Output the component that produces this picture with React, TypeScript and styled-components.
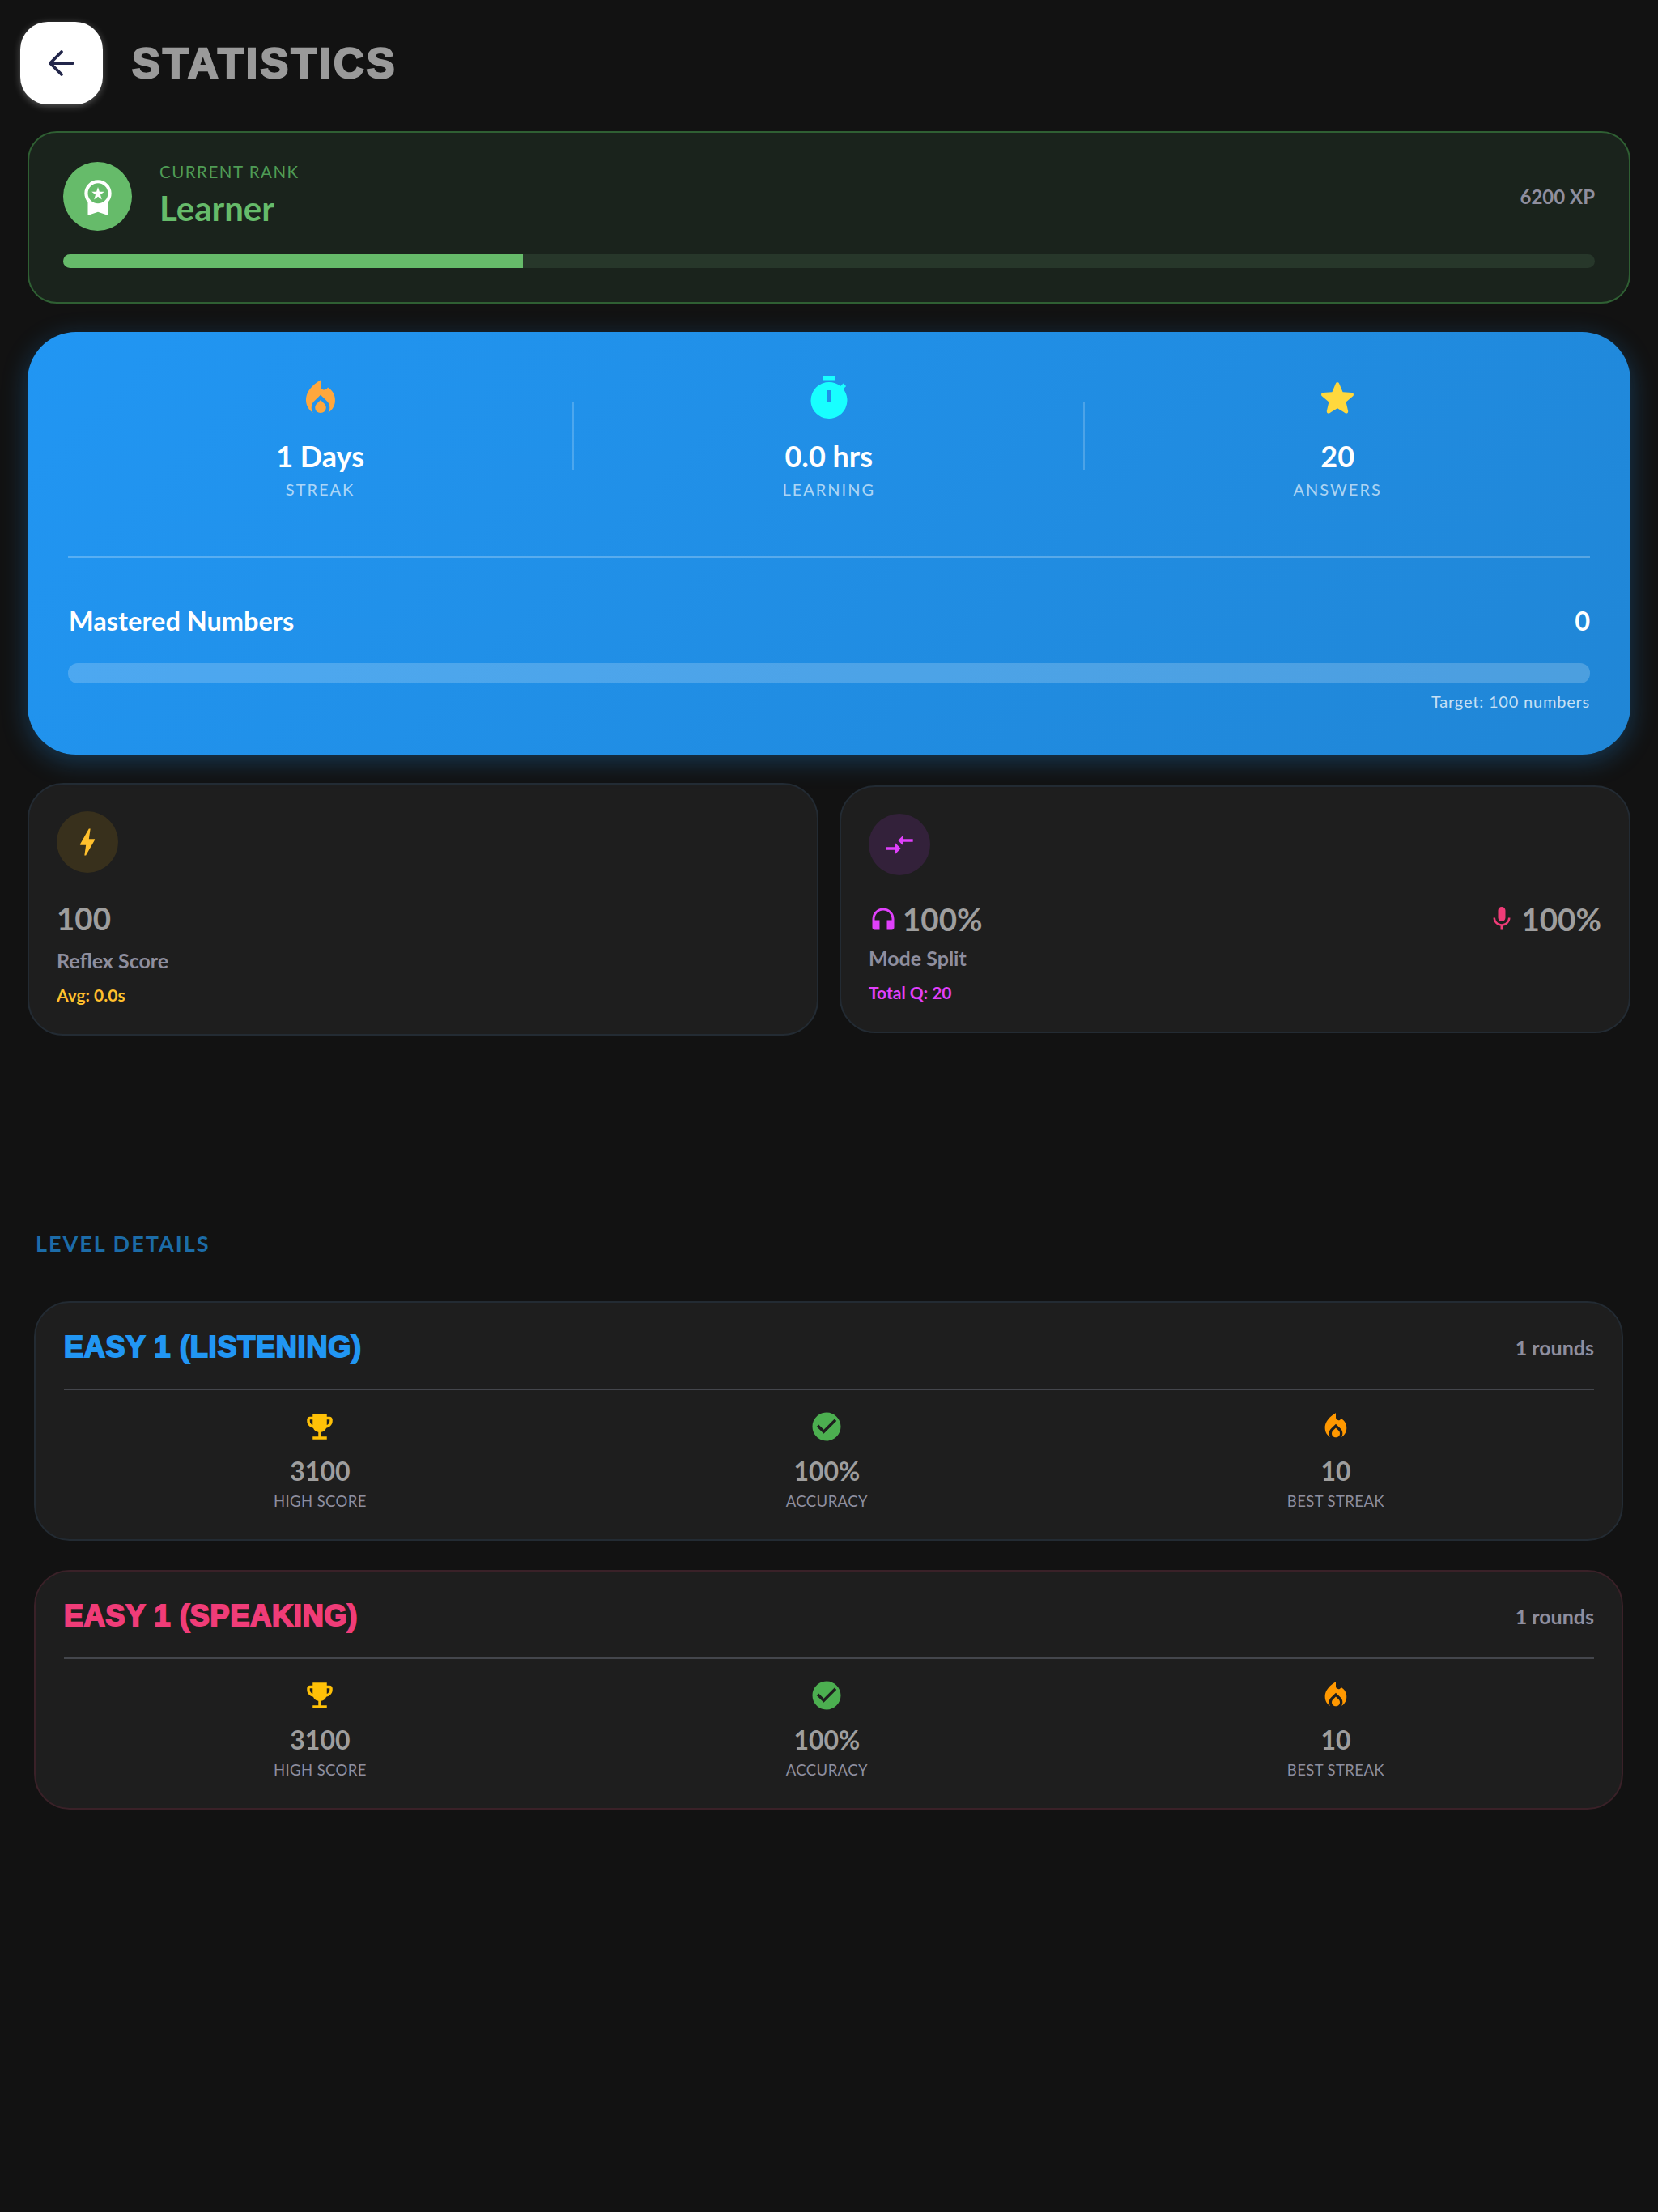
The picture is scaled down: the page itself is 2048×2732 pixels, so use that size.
import React from "react";
import styled, { createGlobalStyle } from "styled-components";
import { ArrowLeft } from "lucide-react";
import {
  MdLocalFireDepartment, MdTimer, MdEmojiEvents, MdCheckCircle,
  MdBolt, MdCompareArrows, MdHeadphones, MdMic, MdWorkspacePremium,
} from "react-icons/md";

const Global = createGlobalStyle`
  html, body { margin: 0; padding: 0; background: #121212; }
  body { font-family: "Lato", "Noto Sans", sans-serif; color: #9e9e9e; }
  * { box-sizing: border-box; }
`;
const Page = styled.div`
  width: 2048px; height: 2732px; background: #121212; overflow: hidden;
  display: flex; flex-direction: column;
`;
const Header = styled.header`
  display: flex; align-items: center; gap: 36px; padding: 27px 25px 0; height: 128px;
`;
const BackButton = styled.button`
  width: 102px; height: 102px; border: 0; border-radius: 34px; background: #fff;
  display: flex; align-items: center; justify-content: center; color: #22264a;
  box-shadow: 0 2px 10px rgba(255,255,255,.3); padding: 0;
`;
const Title = styled.h1`
  margin: 0; font: 700 52px "Liberation Sans", sans-serif; letter-spacing: 3.2px; color: #9a9a9a;
  -webkit-text-stroke: 2.5px #9a9a9a; line-height: 1;
`;
const Column = styled.div`
  display: flex; flex-direction: column; padding: 34px 34px 0; gap: 35px;
`;
const RankCard = styled.section`
  height: 213px; border: 2px solid #2f5f33; border-radius: 36px; background: #1a231c;
  padding: 36px 42px 0; display: flex; flex-direction: column; gap: 29px;
`;
const RankRow = styled.div`
  display: flex; align-items: center; gap: 34px; height: 85px;
`;
const RankIcon = styled.div`
  width: 85px; height: 85px; border-radius: 50%; background: #66bb6a; color: #fff;
  display: flex; align-items: center; justify-content: center;
`;
const RankText = styled.div` flex: 1; display: flex; flex-direction: column; gap: 9px; margin-top: -5px; `;
const RankLabel = styled.div`
  font-size: 20.5px; font-weight: 400; letter-spacing: 1.5px; color: #4f9c55; line-height: 24px;
`;
const RankName = styled.div` font-size: 42px; font-weight: 700; color: #66bb6a; line-height: 48px; `;
const Xp = styled.div` font-size: 24px; font-weight: 700; color: #8e8e9e; `;
const Track = styled.div<{ $h: number; $bg: string; $r: number }>`
  height: ${p => p.$h}px; background: ${p => p.$bg}; border-radius: ${p => p.$r}px; overflow: hidden;
`;
const Fill = styled.div<{ $c: string }>` height: 100%; background: ${p => p.$c}; `;
const BlueCard = styled.section`
  position: relative; z-index: 1;
  height: 522px; border-radius: 60px; padding: 46px 50px 0;
  background: linear-gradient(135deg, #2196f3, #2086d6);
  box-shadow: 0 8px 32px rgba(33,150,243,.3); color: #fff;
`;
const StatRow = styled.div`
  display: flex; align-items: center; height: 206px; padding-bottom: 40px;
`;
const Stat = styled.div`
  flex: 1 1 auto; display: flex; flex-direction: column; align-items: center;
`;
const StatIcon = styled.div<{ $c: string }>`
  height: 60px; display: flex; align-items: center; justify-content: center; color: ${p => p.$c};
`;
const StatValue = styled.div` font-size: 36px; font-weight: 700; line-height: 44px; margin-top: 19px; `;
const StatLabel = styled.div` font-size: 20px; letter-spacing: 2px; color: rgba(255,255,255,.65); line-height: 24px; margin-top: 7px; `;
const VDivider = styled.div` width: 2px; height: 84px; background: rgba(255,255,255,.2); align-self: center; `;
const Rule = styled.div` height: 2px; background: rgba(255,255,255,.25); margin-top: 25px; `;
const MasterRow = styled.div`
  display: flex; justify-content: space-between; align-items: center; margin: 56px 0 30px 1px; height: 44px;
  font-size: 32.5px; font-weight: 700; line-height: 44px;
`;
const Target = styled.div` text-align: right; font-size: 20px; letter-spacing: .8px; color: rgba(255,255,255,.75); margin-top: 10px; line-height: 24px; `;
const Cards = styled.div` display: grid; grid-template-columns: 977px 977px; gap: 26px; align-items: center; `;
const MiniCard = styled.section<{ $h: number }>`
  height: ${p => p.$h}px; border-radius: 44px; border: 2px solid #232b33; background: #1e1e1e; padding: 33px 34px 0;
`;
const MiniIcon = styled.div<{ $bg: string; $c: string }>`
  width: 76px; height: 76px; border-radius: 50%; background: ${p => p.$bg}; color: ${p => p.$c};
  display: flex; align-items: center; justify-content: center;
`;
const MiniValueRow = styled.div<{ $t: number }>`
  display: flex; justify-content: space-between; margin-top: ${p => p.$t}px; height: 44px; align-items: center;
`;
const MiniValue = styled.div`
  display: flex; align-items: center; gap: 6px; font-size: 38.5px; font-weight: 700; color: #9e9e9e; line-height: 44px;
`;
const IconTint = styled.span<{ $c: string }>` display: flex; color: ${p => p.$c}; `;
const MiniLabel = styled.div<{ $t: number }>` font-size: 25px; font-weight: 700; color: #8e8e9e; margin-top: ${p => p.$t}px; line-height: 32px; `;
const MiniNote = styled.div<{ $c: string }>` font-size: 21px; font-weight: 700; color: ${p => p.$c}; margin-top: 14px; line-height: 26px; `;
const SectionTitle = styled.h2`
  margin: 247px 0 0 44px; font-size: 27px; font-weight: 700; letter-spacing: 2px; color: #1c6ca8; line-height: 20px;
`;
const LevelList = styled.div` display: flex; flex-direction: column; gap: 36px; padding: 61px 43px 0 42px; `;
const LevelCard = styled.section<{ $b: string }>`
  height: 296px; border-radius: 44px; border: 2px solid ${p => p.$b}; background: #1e1e1e; padding: 0 34px 0 35px;
`;
const LevelHead = styled.div`
  display: flex; justify-content: space-between; align-items: center; height: 108px; padding-top: 4px; border-bottom: 2px solid #44464c;
`;
const LevelTitle = styled.h3<{ $c: string }>`
  margin: 0; font: 700 36px "Liberation Sans", sans-serif; letter-spacing: .8px; color: ${p => p.$c};
  -webkit-text-stroke: 2px ${p => p.$c}; line-height: 1;
`;
const Rounds = styled.div` font-size: 25px; font-weight: 700; color: #8e8e9e; `;
const LevelStats = styled.div` display: flex; padding-top: 24px; `;
const LevelStat = styled.div` flex: 1 1 auto; display: flex; flex-direction: column; align-items: center; `;
const LevelIcon = styled.div<{ $c: string }>` height: 42px; display: flex; align-items: center; color: ${p => p.$c}; `;
const LevelValue = styled.div` font-size: 32px; font-weight: 700; color: #9e9e9e; line-height: 40px; margin-top: 14px; `;
const LevelLabel = styled.div` font-size: 18.5px; font-weight: 400; letter-spacing: .4px; color: #8e8e9e; line-height: 24px; margin-top: 5px; `;

const levels = [
  { title: "EASY 1 (LISTENING)", color: "#2196f3", border: "#232b33" },
  { title: "EASY 1 (SPEAKING)", color: "#f03c78", border: "#3a2128" },
];

const StarIcon = ({ size }: { size: number }) => (
  <svg width={size} height={size} viewBox="0 0 24 24" fill="currentColor">
    <path d="M12 17.27l4.15 2.51c.76.46 1.69-.22 1.49-1.08l-1.1-4.72 3.67-3.18c.67-.58.31-1.68-.57-1.75l-4.83-.41-1.89-4.46c-.34-.81-1.5-.81-1.84 0L9.19 8.63l-4.83.41c-.88.07-1.24 1.17-.57 1.75l3.67 3.18-1.1 4.72c-.2.86.73 1.54 1.49 1.08l4.15-2.5z" />
  </svg>
);

export default function App() {
  return (
    <Page>
      <Global />
      <Header>
        <BackButton aria-label="Back"><ArrowLeft size={48} strokeWidth={1.9} /></BackButton>
        <Title>STATISTICS</Title>
      </Header>
      <Column>
        <RankCard>
          <RankRow>
            <RankIcon><MdWorkspacePremium size={50} /></RankIcon>
            <RankText>
              <RankLabel>CURRENT RANK</RankLabel>
              <RankName>Learner</RankName>
            </RankText>
            <Xp>6200 XP</Xp>
          </RankRow>
          <Track $h={17} $bg="#27372a" $r={9}><Fill $c="#66bb6a" style={{ width: "30%" }} /></Track>
        </RankCard>
        <BlueCard>
          <StatRow>
            <Stat><StatIcon $c="#ffa73d"><MdLocalFireDepartment size={54} /></StatIcon><StatValue>1 Days</StatValue><StatLabel>STREAK</StatLabel></Stat>
            <VDivider />
            <Stat><StatIcon $c="#18ffff"><MdTimer size={60} /></StatIcon><StatValue>0.0 hrs</StatValue><StatLabel>LEARNING</StatLabel></Stat>
            <VDivider />
            <Stat><StatIcon $c="#ffd83d"><StarIcon size={56} /></StatIcon><StatValue>20</StatValue><StatLabel>ANSWERS</StatLabel></Stat>
          </StatRow>
          <Rule />
          <MasterRow><span>Mastered Numbers</span><span>0</span></MasterRow>
          <Track $h={25} $bg="rgba(255,255,255,.2)" $r={12} />
          <Target>Target: 100 numbers</Target>
        </BlueCard>
        <Cards>
          <MiniCard $h={312}>
            <MiniIcon $bg="#38301c" $c="#ffc02d"><MdBolt size={44} /></MiniIcon>
            <MiniValueRow $t={34}><MiniValue>100</MiniValue></MiniValueRow>
            <MiniLabel $t={14}>Reflex Score</MiniLabel>
            <MiniNote $c="#ffc02d">Avg: 0.0s</MiniNote>
          </MiniCard>
          <MiniCard $h={306}>
            <MiniIcon $bg="#33213a" $c="#e040fb"><MdCompareArrows size={40} /></MiniIcon>
            <MiniValueRow $t={32}>
              <MiniValue><IconTint $c="#e040fb"><MdHeadphones size={36} /></IconTint>100%</MiniValue>
              <MiniValue><IconTint $c="#f03c78"><MdMic size={36} /></IconTint>100%</MiniValue>
            </MiniValueRow>
            <MiniLabel $t={10}>Mode Split</MiniLabel>
            <MiniNote $c="#e040fb">Total Q: 20</MiniNote>
          </MiniCard>
        </Cards>
      </Column>
      <SectionTitle>LEVEL DETAILS</SectionTitle>
      <LevelList>
        {levels.map(l => (
          <LevelCard key={l.title} $b={l.border}>
            <LevelHead>
              <LevelTitle $c={l.color}>{l.title}</LevelTitle>
              <Rounds>1 rounds</Rounds>
            </LevelHead>
            <LevelStats>
              <LevelStat><LevelIcon $c="#ffc107"><MdEmojiEvents size={42} /></LevelIcon><LevelValue>3100</LevelValue><LevelLabel>HIGH SCORE</LevelLabel></LevelStat>
              <LevelStat><LevelIcon $c="#4caf50"><MdCheckCircle size={42} /></LevelIcon><LevelValue>100%</LevelValue><LevelLabel>ACCURACY</LevelLabel></LevelStat>
              <LevelStat><LevelIcon $c="#ff9800"><MdLocalFireDepartment size={40} /></LevelIcon><LevelValue>10</LevelValue><LevelLabel>BEST STREAK</LevelLabel></LevelStat>
            </LevelStats>
          </LevelCard>
        ))}
      </LevelList>
    </Page>
  );
}
